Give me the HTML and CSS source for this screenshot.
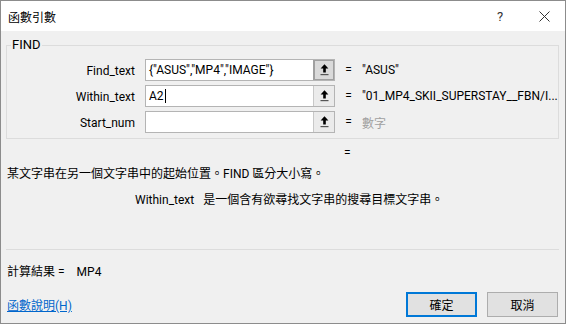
FILE: index.html
```html
<!DOCTYPE html>
<html lang="zh-Hant">
<head>
<meta charset="utf-8">
<link rel="stylesheet" href="styles.css">
</head>
<body>
<div class="window">
  <div class="titlebar">
    <span class="title">函數引數</span>
    <span class="help">?</span>
    <span class="close">
      <svg width="11" height="11" viewBox="0 0 11 11"><path d="M0.5 0.5L10.5 10.5M10.5 0.5L0.5 10.5" stroke="#333" stroke-width="1" fill="none"/></svg>
    </span>
  </div>
  <div class="content">
    <fieldset class="group">
      <legend class="legend">FIND</legend>
      <div class="rows">
        <div class="label">Find_text</div>
        <div class="field">
          <div class="input">{"ASUS","MP4","IMAGE"}</div>
          <div class="refbtn active">
            <svg width="9" height="12" viewBox="0 0 9 12"><path d="M4.5 0.3L0.6 4.6H3.2V8.6H5.8V4.6H8.4Z" fill="#000"/><rect x="0.5" y="10" width="8" height="1.2" fill="#555"/></svg>
          </div>
        </div>
        <div class="eq">=</div>
        <div class="val">"ASUS"</div>

        <div class="label">Within_text</div>
        <div class="field">
          <div class="input">A2<span class="caret"></span></div>
          <div class="refbtn">
            <svg width="9" height="12" viewBox="0 0 9 12"><path d="M4.5 0.3L0.6 4.6H3.2V8.6H5.8V4.6H8.4Z" fill="#000"/><rect x="0.5" y="10" width="8" height="1.2" fill="#555"/></svg>
          </div>
        </div>
        <div class="eq">=</div>
        <div class="val">"01_MP4_SKII_SUPERSTAY__FBN/I...</div>

        <div class="label">Start_num</div>
        <div class="field">
          <div class="input"></div>
          <div class="refbtn">
            <svg width="9" height="12" viewBox="0 0 9 12"><path d="M4.5 0.3L0.6 4.6H3.2V8.6H5.8V4.6H8.4Z" fill="#000"/><rect x="0.5" y="10" width="8" height="1.2" fill="#555"/></svg>
          </div>
        </div>
        <div class="eq">=</div>
        <div class="val muted">數字</div>
      </div>
    </fieldset>
    <div class="result-eq">=</div>
    <div class="desc">某文字串在另一個文字串中的起始位置。FIND 區分大小寫。</div>
    <div class="argdesc"><span class="argname">Within_text</span><span>是一個含有欲尋找文字串的搜尋目標文字串。</span></div>
    <div class="sep"></div>
    <div class="result"><span>計算結果 =</span><span class="resval">MP4</span></div>
    <div class="footer">
      <a class="link">函數說明(H)</a>
      <div class="buttons">
        <button class="btn primary">確定</button>
        <button class="btn">取消</button>
      </div>
    </div>
  </div>
</div>
</body>
</html>
```

FILE: styles.css
```css
html, body {
  margin: 0;
  padding: 0;
  background: #ffffff;
}
body {
  font-family: Roboto, "Noto Sans CJK TC", sans-serif;
  font-size: 12px;
  color: #000;
}
.window {
  width: 564px;
  height: 322px;
  border: 1px solid #8c8c8c;
  background: #f0f0f0;
  display: flex;
  flex-direction: column;
}
.titlebar {
  height: 30px;
  background: #ffffff;
  display: flex;
  align-items: center;
  flex-shrink: 0;
}
.title {
  margin-left: 7px;
  font-size: 12px;
  color: #000;
  flex: 1;
}
.help {
  font-size: 13px;
  color: #333;
  width: 10px;
  margin-right: 32px;
}
.close {
  display: flex;
  margin-right: 15px;
}
.content {
  padding: 0 5px 0 5px;
  display: flex;
  flex-direction: column;
  flex: 1;
}
.group {
  margin: 7px 0 0 0;
  padding: 7px 0 5px 0;
  border: 1px solid #dcdcdc;
  width: 553px;
  box-sizing: border-box;
}
.legend {
  padding: 0 1px;
  margin-left: 4px;
  font-size: 13px;
  line-height: 14px;
  color: #000;
}
.rows {
  display: grid;
  grid-template-columns: 128px 190px 7px 1fr;
  column-gap: 10px;
  row-gap: 4px;
  align-items: center;
}
.label {
  text-align: right;
  font-size: 12px;
  margin-top: 1px;
}
.field {
  display: flex;
  height: 22px;
  border: 1px solid #b4b4b4;
  box-sizing: border-box;
  background: #fff;
}
.input {
  flex: 1;
  padding-left: 3px;
  line-height: 20px;
  font-size: 12px;
  white-space: nowrap;
  overflow: hidden;
  display: flex;
  align-items: center;
}
.caret {
  display: inline-block;
  width: 1px;
  height: 14px;
  background: #000;
  margin-left: 1px;
}
.refbtn {
  width: 20px;
  border-left: 1px solid #c8c8c8;
  background: #ebebeb;
  display: flex;
  align-items: center;
  justify-content: center;
}
.refbtn.active {
  background: #dadada;
  border-left: 1px solid #a0a0a0;
  box-shadow: inset 0 0 0 1px #a0a0a0;
}
.eq {
  text-align: center;
}
.val {
  white-space: nowrap;
}
.muted {
  color: #a0a0a0;
}
.result-eq {
  margin-top: 7px;
  margin-left: 338px;
  line-height: 14px;
}
.desc {
  margin-top: 7px;
  line-height: 14px;
  margin-left: 1px;
}
.argdesc {
  margin-top: 12px;
  margin-left: 129px;
  display: flex;
  gap: 9px;
  line-height: 14px;
}
.sep {
  margin-top: 42px;
  height: 1px;
  background: #dcdcdc;
  width: 553px;
}
.result {
  margin-top: 15px;
  margin-left: 1px;
  display: flex;
  line-height: 14px;
}
.resval {
  margin-left: 12px;
}
.footer {
  display: flex;
  justify-content: space-between;
  align-items: center;
  margin-top: 13px;
}
.link {
  color: #0066cc;
  text-decoration: underline;
  margin-left: 1px;
  cursor: pointer;
}
.buttons {
  display: flex;
  gap: 10px;
  margin-right: 2px;
}
.btn {
  width: 71px;
  height: 25px;
  font-family: Roboto, "Noto Sans CJK TC", sans-serif;
  font-size: 12px;
  background: #e1e1e1;
  border: 1px solid #adadad;
  color: #000;
  padding: 0;
}
.btn.primary {
  border: 1px solid #0078d7;
  box-shadow: inset 0 0 0 1px #0078d7;
}
```
